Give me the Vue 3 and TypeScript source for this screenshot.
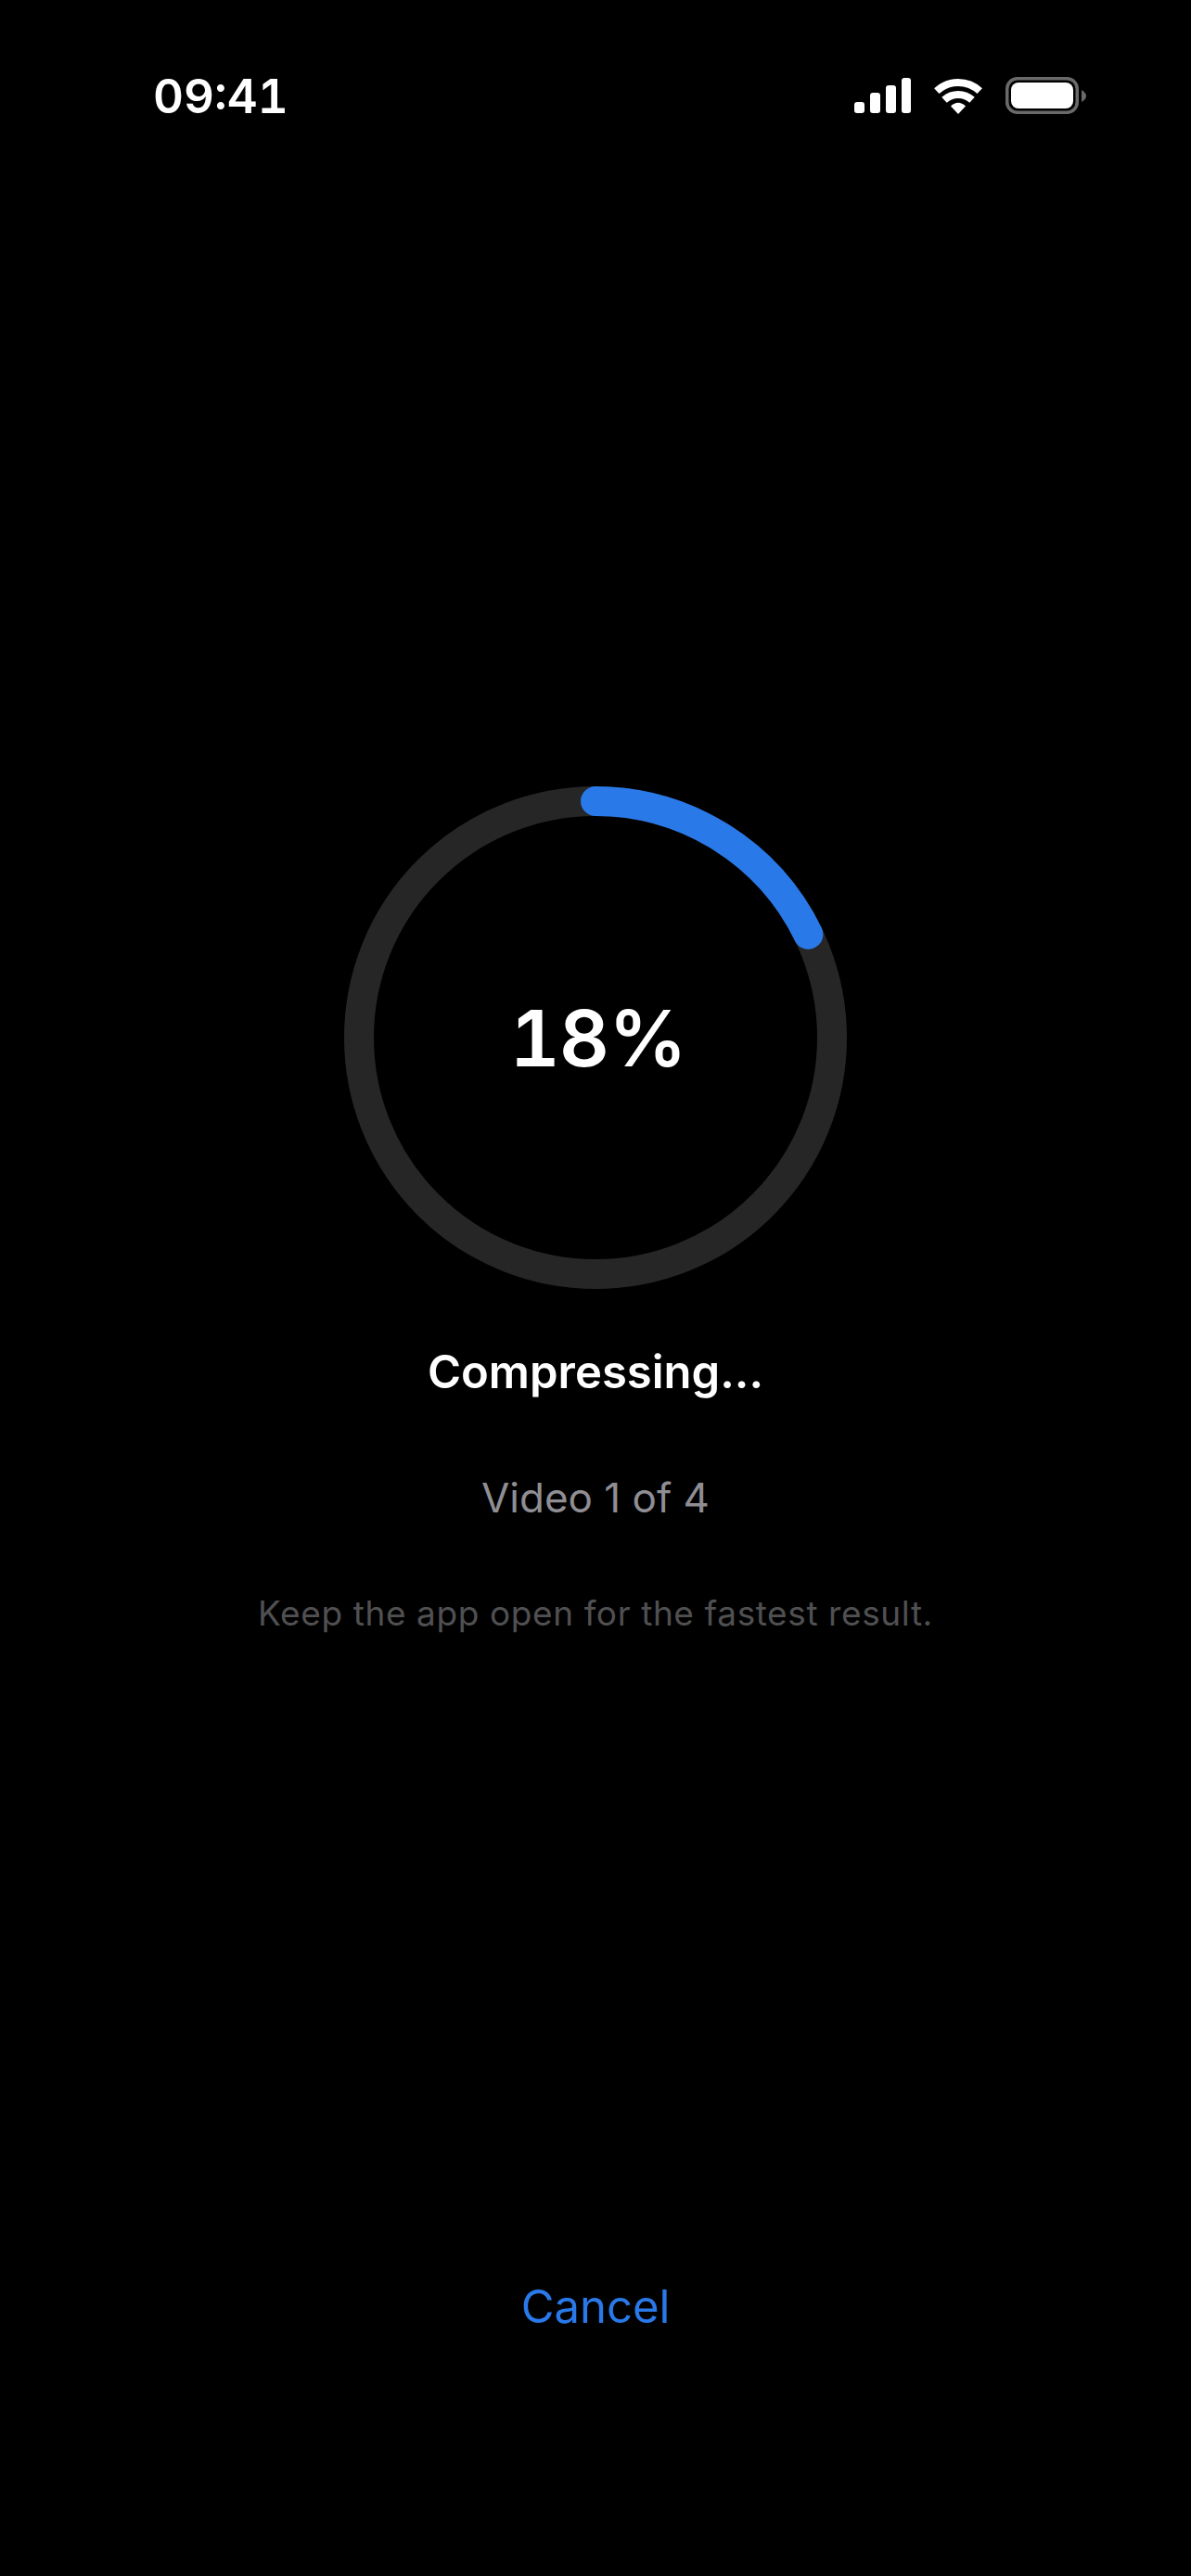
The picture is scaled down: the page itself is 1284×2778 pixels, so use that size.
<script setup lang="ts">
const radius = 255
const circumference = 2 * Math.PI * radius
const progress = 0.178
const dash = `${circumference * progress} ${circumference}`
</script>

<template>
  <div class="screen">
    <header class="status">
      <span class="time">09:41</span>
      <div class="icons">
        <svg class="signal" width="61" height="38" viewBox="0 0 61 38" fill="#fff">
          <rect x="0" y="26" width="11" height="12" rx="3" />
          <rect x="17" y="16" width="11" height="22" rx="3" />
          <rect x="34" y="8" width="11" height="30" rx="3" />
          <rect x="51" y="0" width="10" height="38" rx="3" />
        </svg>
        <svg class="wifi" width="52" height="38" viewBox="0 0 52 38" fill="none" stroke="#fff">
          <path d="M2.8 13.2A34 34 0 0 1 49.2 13.2" stroke-width="8" />
          <path d="M11 22.8A22 22 0 0 1 41 22.8" stroke-width="8" />
          <path d="M18 29.5Q26 22 34 29.5L26 38Z" fill="#fff" stroke="none" />
        </svg>
        <svg class="battery" width="88" height="40" viewBox="0 0 88 40" fill="none">
          <rect x="1.75" y="1.75" width="75.5" height="36.5" rx="11" stroke="#6a6a6a" stroke-width="3.5" />
          <rect x="6" y="6" width="67" height="28" rx="8" fill="#fff" />
          <path d="M82 14V27Q87 24 87 20.5T82 14Z" fill="#6a6a6a" />
        </svg>
      </div>
    </header>

    <main class="content">
      <div class="ring">
        <svg width="542" height="542" viewBox="0 0 542 542" fill="none">
          <circle cx="271" cy="271" :r="radius" stroke="#262626" stroke-width="32" />
          <circle
            class="arc"
            cx="271"
            cy="271"
            :r="radius"
            stroke="#2979e9"
            stroke-width="32"
            stroke-linecap="round"
            :stroke-dasharray="dash"
          />
        </svg>
        <span class="percent">18%</span>
      </div>
      <h1 class="title">Compressing...</h1>
      <p class="count">Video 1 of 4</p>
      <p class="hint">Keep the app open for the fastest result.</p>
    </main>

    <button class="cancel" type="button">Cancel</button>
  </div>
</template>

<style>
html,
body {
  margin: 0;
  background: #000;
}
</style>

<style scoped>
.screen {
  width: 1284px;
  height: 2778px;
  background: #000;
  color: #fff;
  font-family: Inter, "Liberation Sans", sans-serif;
  display: flex;
  flex-direction: column;
  align-items: center;
}
.status {
  width: 100%;
  box-sizing: border-box;
  height: 204px;
  padding: 74px 112px 0 165px;
  display: flex;
  justify-content: space-between;
  align-items: flex-start;
}
.time {
  font-size: 51px;
  font-weight: 600;
  line-height: 60px;
  font-feature-settings: "tnum";
}
.icons {
  display: flex;
  align-items: flex-start;
  gap: 25px;
  padding-top: 11px;
}
.signal {
  margin-top: -1px;
}
.battery {
  margin-top: -2px;
}
.content {
  margin-top: 644px;
  display: flex;
  flex-direction: column;
  align-items: center;
}
.ring {
  position: relative;
  width: 542px;
  height: 542px;
}
.ring svg {
  display: block;
}
.arc {
  transform: rotate(-90deg);
  transform-origin: 271px 271px;
}
.percent {
  position: absolute;
  inset: 0 0 0 5px;
  display: flex;
  align-items: center;
  justify-content: center;
  font-size: 84px;
  font-weight: 600;
  font-feature-settings: "tnum";
  letter-spacing: -1px;
}
.title {
  margin: 60px 0 0;
  font-size: 49px;
  line-height: 60px;
  font-weight: 600;
}
.count {
  margin: 79px 0 0;
  font-size: 44px;
  line-height: 52px;
  font-weight: 400;
  color: #8e8e93;
}
.hint {
  margin: 77px 0 0;
  font-size: 37px;
  line-height: 44px;
  font-weight: 400;
  letter-spacing: 0.6px;
  color: #505052;
}
.cancel {
  margin-top: 696px;
  padding: 0;
  border: 0;
  background: none;
  font: inherit;
  font-size: 49px;
  line-height: 60px;
  color: #2979e9;
}
</style>
